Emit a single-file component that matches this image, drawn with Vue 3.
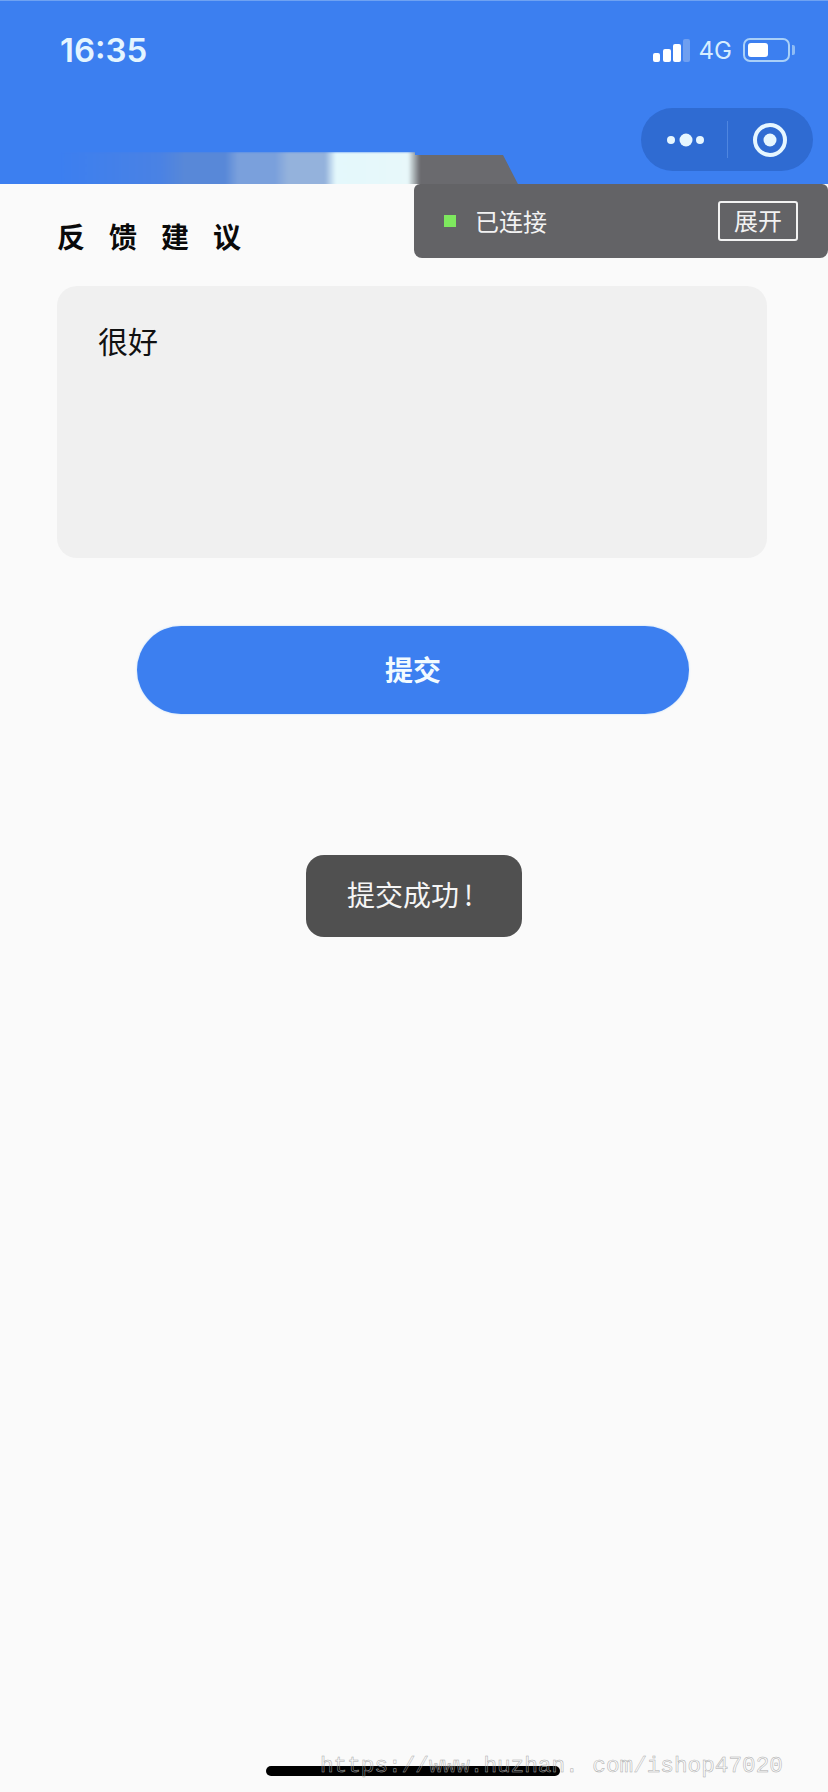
<template>
  <div class="page">
    <header class="top-bar">
      <div class="status-row">
        <div class="time">16:35</div>
        <div class="status-icons">
          <svg class="signal" width="37" height="23" viewBox="0 0 37 23">
            <rect x="0" y="14" width="7" height="9" rx="2" fill="#fff" />
            <rect x="10" y="10" width="8" height="13" rx="2" fill="#fff" />
            <rect x="20" y="5" width="8" height="18" rx="2" fill="#fff" />
            <rect x="30" y="0" width="7" height="23" rx="2" fill="#6f9ff0" />
          </svg>
          <span class="net">4G</span>
          <div class="battery">
            <div class="battery-fill"></div>
          </div>
          <div class="battery-nub"></div>
        </div>
      </div>
      <div class="nav-row">
        <div class="capsule">
          <div class="capsule-side">
            <svg class="dots" width="40" height="16" viewBox="0 0 40 16">
              <circle cx="5" cy="8" r="4" fill="#e6f6ff" />
              <circle cx="20" cy="8" r="6.5" fill="#e6f6ff" />
              <circle cx="34" cy="8" r="4" fill="#e6f6ff" />
            </svg>
          </div>
          <div class="capsule-line"></div>
          <div class="capsule-side">
            <svg width="36" height="36" viewBox="0 0 36 36">
              <circle cx="18" cy="18" r="15" fill="none" stroke="#e6f6ff" stroke-width="4" />
              <circle cx="18" cy="18" r="6.5" fill="#e6f6ff" />
            </svg>
          </div>
        </div>
      </div>
      <div class="smudge-clip">
        <div class="smudge"></div>
      </div>
    </header>

    <div class="debug-bar">
      <div class="debug-left">
        <span class="dot"></span>
        <span class="debug-text">已连接</span>
      </div>
      <div class="expand-btn">展开</div>
    </div>

    <main class="content">
      <div class="title">反馈建议</div>
      <div class="input-box">很好</div>
      <div class="submit-btn">提交</div>
    </main>

    <div class="toast">提交成功<span class="bang">!</span></div>

    <div class="home-bar"></div>
    <div class="watermark">https://www.huzhan. com/ishop47020</div>
  </div>
</template>

<script setup>
</script>

<style>
html,
body {
  margin: 0;
  background: #fafafa;
}
</style>

<style scoped>
.page {
  position: relative;
  width: 828px;
  height: 1792px;
  overflow: hidden;
  background: #fafafa;
  font-family: "Noto Sans CJK SC", "Noto Sans", sans-serif;
}

/* blue top */
.top-bar {
  position: relative;
  height: 183px;
  background: #3c7ff0;
  border-top: 1px solid #6fa2f2;
}

.status-row {
  display: flex;
  justify-content: space-between;
  align-items: center;
  height: 98px;
  padding: 0 33px 0 60px;
}

.time {
  font-family: Inter, "Liberation Sans", sans-serif;
  font-size: 33px;
  font-weight: 600;
  color: #e4f5ff;
}

.status-icons {
  display: flex;
  align-items: center;
  color: #d6eeff;
}

.signal {
  margin-right: 9px;
}

.net {
  font-family: Inter, "Liberation Sans", sans-serif;
  font-size: 24px;
  margin-right: 11px;
}

.battery {
  box-sizing: border-box;
  width: 47px;
  height: 24px;
  padding: 3px;
  border: 2px solid #a9d0f8;
  border-radius: 7px;
}

.battery-fill {
  width: 20px;
  height: 100%;
  background: #fff;
  border-radius: 3px;
}

.battery-nub {
  width: 3px;
  height: 10px;
  margin-left: 2px;
  background: #8fbcf5;
  border-radius: 0 2px 2px 0;
}

.nav-row {
  display: flex;
  justify-content: flex-end;
  padding: 9px 15px 0 0;
}

.capsule {
  display: flex;
  align-items: center;
  width: 172px;
  height: 63px;
  background: #2f6bd2;
  border-radius: 32px;
}

.capsule-side {
  flex: 1;
  display: flex;
  justify-content: center;
  align-items: center;
}

.dots {
  margin-left: 4px;
}

.capsule-line {
  width: 1px;
  height: 37px;
  background: #4f86e0;
}

/* blurred out page title */
.smudge-clip {
  position: absolute;
  left: 60px;
  bottom: 0;
  width: 470px;
  height: 34px;
  overflow: hidden;
}

.smudge {
  position: absolute;
  top: 2px;
  left: 0;
  width: 460px;
  height: 36px;
  filter: blur(1px);
  background: linear-gradient(
    90deg,
    #3c7ff0 0,
    #4a82e4 100px,
    #5888d8 125px,
    #5888d8 165px,
    #7aa0dc 178px,
    #7aa0dc 215px,
    #94b2dc 228px,
    #94b2dc 265px,
    #e4f8fc 276px,
    #e8f8fa 348px,
    #6a6a6e 360px,
    #6a6a6e 460px
  );
  clip-path: polygon(0 0, 355px 0, 355px 3px, 443px 3px, 460px 100%, 0 100%);
}

/* vconsole style bar */
.debug-bar {
  position: absolute;
  top: 184px;
  left: 414px;
  right: 0;
  height: 74px;
  box-sizing: border-box;
  display: flex;
  justify-content: space-between;
  align-items: center;
  padding: 0 30px;
  background: #636366;
  border-radius: 6px 6px 8px 8px;
  color: #f2f2f2;
  font-size: 24px;
}

.debug-left {
  display: flex;
  align-items: center;
  gap: 19px;
}

.debug-text {
  margin-top: -2px;
}

.dot {
  width: 12px;
  height: 12px;
  background: #7ee85e;
}

.expand-btn {
  box-sizing: border-box;
  width: 80px;
  height: 40px;
  line-height: 34px;
  text-align: center;
  border: 2px solid #f2f2f2;
  border-radius: 3px;
}

.content {
  padding: 0 61px 0 57px;
}

.title {
  margin-top: 32px;
  height: 40px;
  line-height: 40px;
  font-size: 28px;
  font-weight: 700;
  letter-spacing: 24px;
  color: #0a0a0a;
}

.input-box {
  box-sizing: border-box;
  height: 272px;
  margin-top: 30px;
  padding: 32px 41px;
  background: #f0f0f0;
  border-radius: 20px;
  font-size: 30px;
  line-height: 44px;
  color: #111;
}

.submit-btn {
  width: 552px;
  height: 88px;
  margin: 68px 0 0 80px;
  line-height: 86px;
  text-align: center;
  background: #3c7ff0;
  border-radius: 44px;
  box-shadow: 0 0 2px rgba(130, 190, 255, 0.6);
  color: #f2fbff;
  font-size: 28px;
  font-weight: 700;
}

.toast {
  position: absolute;
  top: 855px;
  left: 306px;
  box-sizing: border-box;
  width: 216px;
  height: 82px;
  padding-left: 41px;
  line-height: 78px;
  background: #505050;
  border-radius: 18px;
  color: #f5f5f5;
  font-size: 28px;
}

.bang {
  margin-left: 5px;
}

.home-bar {
  position: absolute;
  top: 1766px;
  left: 266px;
  width: 294px;
  height: 10px;
  background: #000;
  border-radius: 5px;
}

.watermark {
  position: absolute;
  top: 1749px;
  left: 320px;
  font-family: "Liberation Mono", monospace;
  font-size: 22.7px;
  line-height: 34px;
  white-space: nowrap;
  color: transparent;
  -webkit-text-stroke: 0.5px #aaa;
}
</style>
